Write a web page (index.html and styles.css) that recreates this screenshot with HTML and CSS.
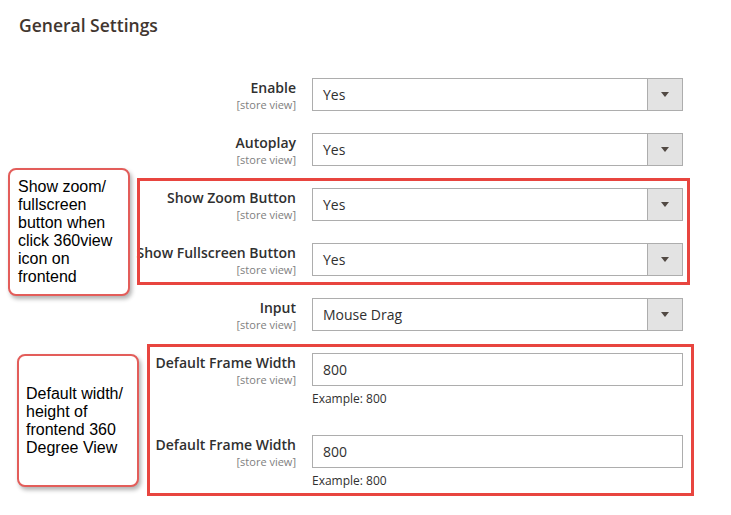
FILE: index.html
```html
<!DOCTYPE html>
<html>
<head>
<meta charset="utf-8">
<link rel="stylesheet" href="styles.css">
</head>
<body>
<div class="page">
  <h2 class="title">General Settings</h2>
  <div class="form">
    <div class="row">
      <div class="label"><span class="name">Enable</span><span class="scope">[store view]</span></div>
      <div class="control"><div class="select"><span class="value">Yes</span><span class="arrow"><i></i></span></div></div>
    </div>
    <div class="row">
      <div class="label"><span class="name">Autoplay</span><span class="scope">[store view]</span></div>
      <div class="control"><div class="select"><span class="value">Yes</span><span class="arrow"><i></i></span></div></div>
    </div>
    <div class="row">
      <div class="label"><span class="name">Show Zoom Button</span><span class="scope">[store view]</span></div>
      <div class="control"><div class="select"><span class="value">Yes</span><span class="arrow"><i></i></span></div></div>
    </div>
    <div class="row">
      <div class="label"><span class="name">Show Fullscreen Button</span><span class="scope">[store view]</span></div>
      <div class="control"><div class="select"><span class="value">Yes</span><span class="arrow"><i></i></span></div></div>
    </div>
    <div class="row">
      <div class="label"><span class="name">Input</span><span class="scope">[store view]</span></div>
      <div class="control"><div class="select"><span class="value">Mouse Drag</span><span class="arrow"><i></i></span></div></div>
    </div>
    <div class="row">
      <div class="label"><span class="name">Default Frame Width</span><span class="scope">[store view]</span></div>
      <div class="control"><div class="input"><span class="value">800</span></div><div class="note">Example: 800</div></div>
    </div>
    <div class="row">
      <div class="label"><span class="name">Default Frame Width</span><span class="scope">[store view]</span></div>
      <div class="control"><div class="input"><span class="value">800</span></div><div class="note">Example: 800</div></div>
    </div>
  </div>

  <div class="mark mark-1"></div>
  <div class="mark mark-2"></div>
  <div class="callout callout-1"><p>Show zoom/<br>fullscreen<br>button when<br>click 360view<br>icon on<br>frontend</p></div>
  <div class="callout callout-2"><p>Default width/<br>height of<br>frontend 360<br>Degree View</p></div>
</div>
</body>
</html>
```

FILE: styles.css
```css
html, body {
  margin: 0;
  padding: 0;
  background: #ffffff;
}
body {
  font-family: "Open Sans", "Liberation Sans", sans-serif;
  color: #303030;
  width: 731px;
  height: 515px;
  overflow: hidden;
}
.page {
  position: relative;
  height: 515px;
}
.title {
  margin: 0;
  padding: 14px 0 0 19px;
  font-size: 17.5px;
  font-weight: 600;
  line-height: 23px;
  color: #41362f;
}
.form {
  margin-top: 41px;
  display: flex;
  flex-direction: column;
}
.row {
  display: flex;
  align-items: flex-start;
  gap: 16px;
  margin-bottom: 22px;
}
.label {
  width: 296px;
  height: 33px;
  flex: none;
  display: flex;
  flex-direction: column;
  align-items: flex-end;
  text-align: right;
  white-space: nowrap;
}
.name {
  font-size: 14px;
  font-weight: 600;
  line-height: 19px;
  color: #303030;
}
.scope {
  font-size: 11px;
  line-height: 15px;
  color: #808080;
}
.control {
  width: 371px;
  flex: none;
}
.select, .input {
  box-sizing: border-box;
  height: 33px;
  border: 1px solid #adadad;
  display: flex;
  align-items: center;
  background: #fff;
}
.value {
  flex: 1;
  padding-left: 10px;
  font-size: 14px;
  color: #303030;
}
.arrow {
  width: 35px;
  align-self: stretch;
  box-sizing: border-box;
  border-left: 1px solid #adadad;
  background: #e3e3e3;
  display: flex;
  align-items: center;
  justify-content: center;
}
.arrow i {
  display: block;
  width: 0;
  height: 0;
  border-left: 4px solid transparent;
  border-right: 4px solid transparent;
  border-top: 5px solid #514943;
}
.note {
  margin-top: 4px;
  margin-bottom: 5px;
  font-size: 12px;
  line-height: 18px;
  color: #303030;
}
.mark {
  position: absolute;
  box-sizing: border-box;
  border: 3px solid #e8453f;
}
.mark-1 {
  left: 137px;
  top: 178px;
  width: 553px;
  height: 107px;
}
.mark-2 {
  left: 147px;
  top: 344px;
  width: 547px;
  height: 152px;
}
.callout {
  position: absolute;
  box-sizing: border-box;
  border: 2px solid #e35d5a;
  border-radius: 8px;
  background: #fff;
  box-shadow: 2px 3px 4px rgba(0, 0, 0, 0.3);
  display: flex;
  align-items: center;
  font-family: "Liberation Sans", Arial, sans-serif;
  font-size: 16px;
  line-height: 18px;
  color: #000;
}
.callout p {
  margin: 0;
}
.callout-1 {
  left: 8px;
  top: 168px;
  width: 122px;
  height: 128px;
  padding-left: 8px;
}
.callout-2 {
  left: 17px;
  top: 354px;
  width: 122px;
  height: 133px;
  padding-left: 7px;
}
```
